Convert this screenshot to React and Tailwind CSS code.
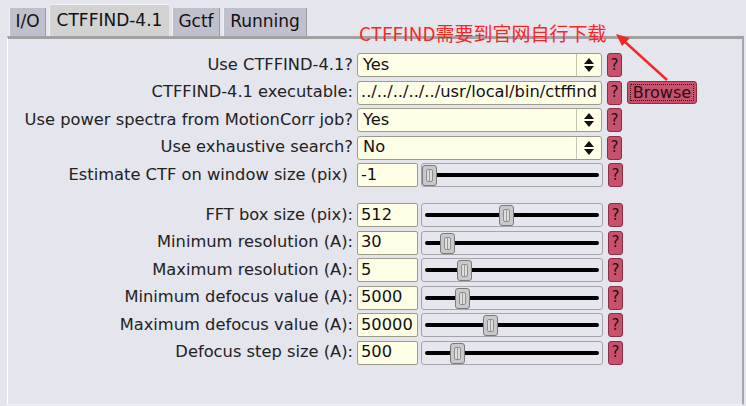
import React from 'react';

const tabs = [
  { id: 'io', label: 'I/O', w: 'w-[37px]' },
  { id: 'ctf', label: 'CTFFIND-4.1', w: 'w-[120px]', active: true },
  { id: 'gctf', label: 'Gctf', w: 'w-[48px]' },
  { id: 'run', label: 'Running', w: 'w-[84px]' },
];

const Help = () => (
  <div className="ml-[5px] w-[15px] h-[24px] shrink-0 rounded-[3px] border border-[#8a2d45] bg-[#c8526d] flex items-center justify-center text-[15px] leading-none text-[#2b0c14]">
    ?
  </div>
);

const Label = ({ children }) => (
  <div className="w-[349px] shrink-0 pr-[4px] text-right text-[16.3px] text-[#222] whitespace-pre">{children}</div>
);

const Select = ({ value }) => (
  <div className="w-[245px] h-[24px] shrink-0 flex items-center rounded-[3px] border border-[#9c9c88] bg-[#ffffe8]">
    <div className="flex-1 pl-[5px] text-[16.3px] text-[#111]">{value}</div>
    <div className="w-[25px] h-full border-l border-[#c4c4b0] flex flex-col items-center justify-center gap-[2px]">
      <svg width="10" height="6" viewBox="0 0 10 6"><polygon points="0,6 10,6 5,0" fill="#111" /></svg>
      <svg width="10" height="6" viewBox="0 0 10 6"><polygon points="0,0 10,0 5,6" fill="#111" /></svg>
    </div>
  </div>
);

const Slider = ({ value, pos }) => (
  <>
    <div className="w-[61px] h-[24px] shrink-0 flex items-center rounded-[2px] border border-[#9c9c88] bg-[#ffffe8] pl-[3px] text-[16.3px] text-[#111]">
      {value}
    </div>
    <div className="ml-[3px] w-[182px] h-[24px] shrink-0 relative rounded-[3px] border border-[#a4a4aa] bg-[#e6e6ee] flex items-center px-[3px]">
      <div className="h-[4px] w-full rounded-full bg-black" />
      <div
        className="absolute top-[1px] bottom-[0px] w-[15px] rounded-[3px] border border-[#7a7a7a] bg-[#c9c9c9] p-[3px]"
        style={{ left: pos }}
      >
        <div className="h-full w-full rounded-[2px] border border-[#8e8e8e] bg-[#dedede] flex justify-center">
          <div className="w-[1px] h-full bg-[#9a9a9a]" />
        </div>
      </div>
    </div>
  </>
);

const sliders = [
  { label: 'FFT box size (pix):', value: '512', pos: 77 },
  { label: 'Minimum resolution (A):', value: '30', pos: 18 },
  { label: 'Maximum resolution (A):', value: '5', pos: 35 },
  { label: 'Minimum defocus value (A):', value: '5000', pos: 33 },
  { label: 'Maximum defocus value (A):', value: '50000', pos: 61 },
  { label: 'Defocus step size (A):', value: '500', pos: 28 },
];

export default function App() {
  return (
    <div className="relative w-[746px] h-[406px] bg-[#e5e5ee] font-['DejaVu_Sans',sans-serif] overflow-hidden pt-[4px]">
      {/* Tabs */}
      <div className="flex items-end gap-[3px] pl-[9px] h-[32px]">
        {tabs.map((t) => (
          <div
            key={t.id}
            className={
              t.active
                ? `${t.w} h-[32px] flex items-center justify-center text-[17px] text-[#111] bg-[#d2d2d2] border-l border-t border-[#f2f2f2]`
                : `${t.w} h-[28px] flex items-center justify-center text-[17px] text-[#111] bg-[#c0c0cc] border-l border-[#f0f0f4] border-r border-r-[#9c9ca8]`
            }
          >
            {t.label}
          </div>
        ))}
      </div>

      {/* Panel */}
      <div className="ml-[7px] w-[737px] h-[369px] border-t-[3px] border-t-[#a2a2a2] border-l border-l-white border-r-2 border-r-[#a6a6ae] border-b border-b-[#f4f4f8] pt-[14px]">
        <div className="flex flex-col gap-[3.5px]">
          <div className="flex items-center h-[24px]">
            <Label>Use CTFFIND-4.1?</Label>
            <Select value="Yes" />
            <Help />
          </div>
          <div className="flex items-center h-[24px]">
            <Label>CTFFIND-4.1 executable:</Label>
            <div className="w-[245px] h-[24px] shrink-0 flex items-center rounded-[3px] border border-[#9c9c88] bg-[#ffffe8] pl-[3px] text-[16.3px] text-[#111]">
              ../../../../../usr/local/bin/ctffind
            </div>
            <Help />
            <div className="ml-[5px] w-[70px] h-[23px] rounded-[3px] border border-[#8a2d45] bg-[#c8526d] p-[2px]">
              <div className="h-full w-full border border-dotted border-[#3a0d18] flex items-center justify-center text-[16px] leading-none text-[#2b0c14]">
                Browse
              </div>
            </div>
          </div>
          <div className="flex items-center h-[24px]">
            <Label>Use power spectra from MotionCorr job?</Label>
            <Select value="Yes" />
            <Help />
          </div>
          <div className="flex items-center h-[24px]">
            <Label>Use exhaustive search?</Label>
            <Select value="No" />
            <Help />
          </div>
          <div className="flex items-center h-[24px]">
            <Label>Estimate CTF on window size (pix) </Label>
            <Slider value="-1" pos={0} />
            <Help />
          </div>
        </div>

        <div className="flex flex-col gap-[3.5px] mt-[16px]">
          {sliders.map((s) => (
            <div key={s.label} className="flex items-center h-[24px]">
              <Label>{s.label}</Label>
              <Slider value={s.value} pos={s.pos} />
              <Help />
            </div>
          ))}
        </div>
      </div>

      {/* Annotation */}
      <div className="absolute left-[359px] top-[23px] text-[19px] leading-none text-[#ff2424] font-['Noto_Sans_CJK_SC',sans-serif]">
        CTFFIND需要到官网自行下载
      </div>
      <svg className="absolute left-0 top-0 pointer-events-none" width="746" height="406">
        <line x1="667" y1="80" x2="624" y2="41" stroke="#f02a2a" strokeWidth="2.5" />
        <polygon points="616,34 630,38 622,46" fill="#f02a2a" />
      </svg>
    </div>
  );
}
